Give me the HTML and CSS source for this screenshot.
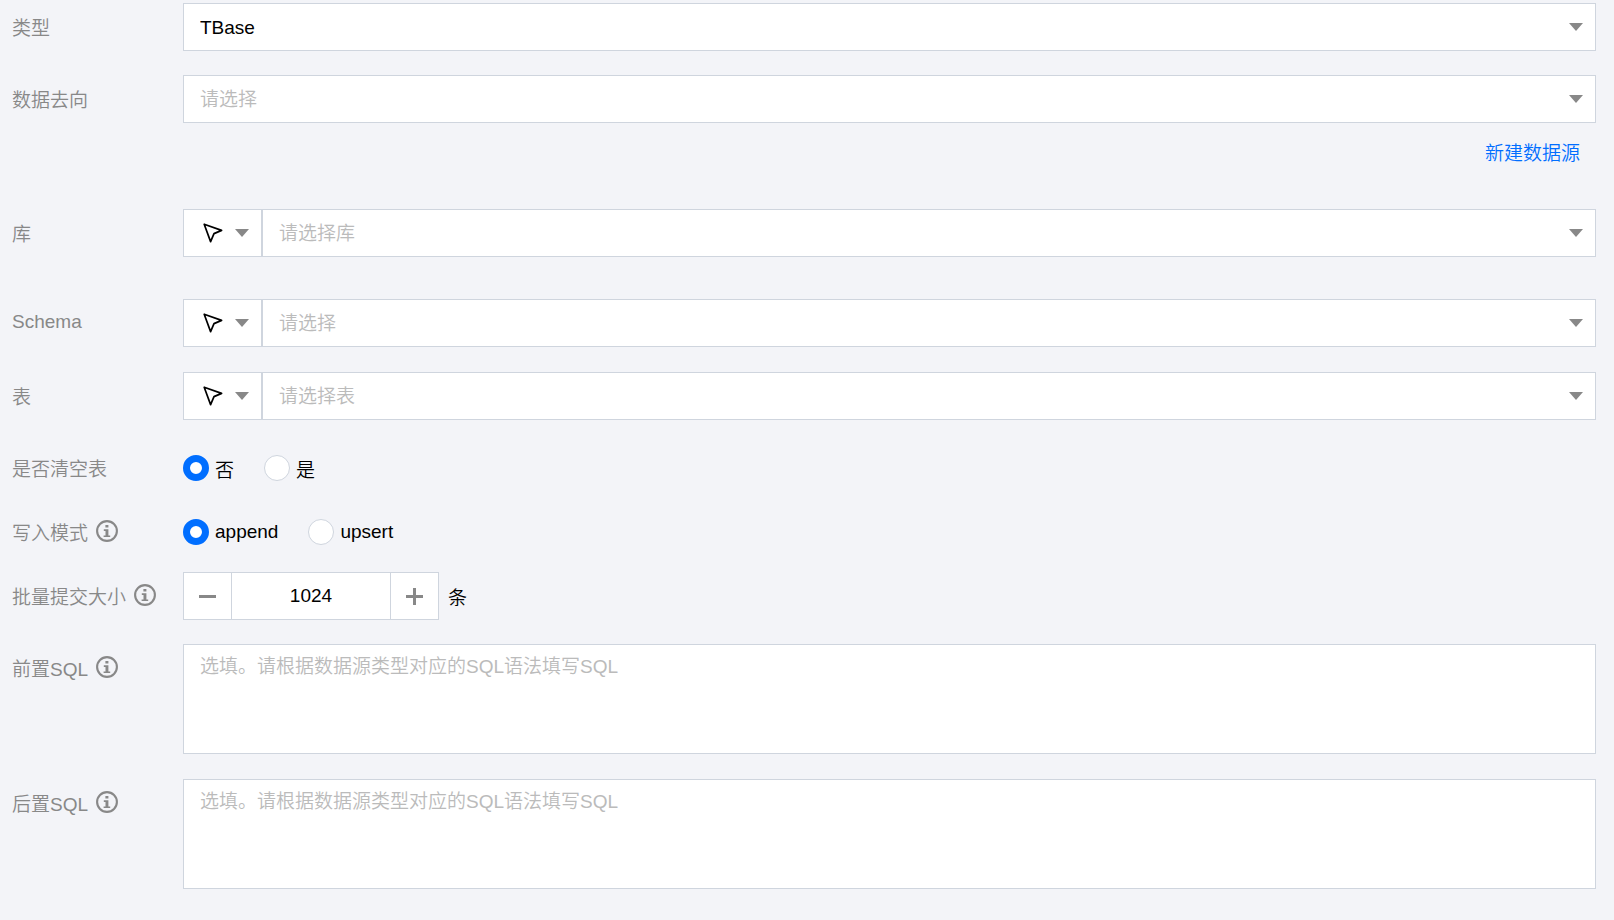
FILE: index.html
```html
<!DOCTYPE html>
<html lang="zh-CN">
<head>
    <meta charset="UTF-8">
    <meta name="viewport" content="width=device-width, initial-scale=1.0">
    <title>数据去向</title>
    <link rel="stylesheet" href="styles.css">
</head>
<body>

    <!-- shared icons -->
    <svg class="sprite" aria-hidden="true">
        <symbol id="icon-cursor" viewBox="0 0 20 20">
            <path d="M1.2 1.2 L18.6 7.4 L11 10.6 L7.6 18.6 Z" fill="none" stroke="#000" stroke-width="1.7" stroke-linejoin="round"/>
        </symbol>
        <symbol id="icon-info" viewBox="0 0 22 22">
            <circle cx="11" cy="11" r="9.9" fill="none" stroke="#888" stroke-width="2.1"/>
            <path d="M9.4 5h3v2.6h-3z M7.8 9.3h4.6v6.1h1.8v1.7H7.6v-1.7h1.9V11H7.8z" fill="#888"/>
        </symbol>
    </svg>

    <form class="form">
        <div class="row">
            <label class="label" for="type">类型</label>
            <div class="select">
                <select id="type">
                    <option>TBase</option>
                </select>
            </div>
        </div>

        <div class="row row-wide">
            <label class="label" for="source">数据去向</label>
            <div>
                <div class="select">
                    <select id="source" required>
                        <option value="">请选择</option>
                    </select>
                </div>
                <div class="extra"><a href="#">新建数据源</a></div>
            </div>
        </div>

        <div class="row row-wide">
            <label class="label" for="db">库</label>
            <div class="group">
                <button type="button" class="mode" aria-label="选择方式"><svg class="cursor"><use href="#icon-cursor"/></svg></button>
                <div class="select">
                    <select id="db" required>
                        <option value="">请选择库</option>
                    </select>
                </div>
            </div>
        </div>

        <div class="row row-loose">
            <label class="label" for="schema">Schema</label>
            <div class="group">
                <button type="button" class="mode" aria-label="选择方式"><svg class="cursor"><use href="#icon-cursor"/></svg></button>
                <div class="select">
                    <select id="schema" required>
                        <option value="">请选择</option>
                    </select>
                </div>
            </div>
        </div>

        <div class="row">
            <label class="label" for="table">表</label>
            <div class="group">
                <button type="button" class="mode" aria-label="选择方式"><svg class="cursor"><use href="#icon-cursor"/></svg></button>
                <div class="select">
                    <select id="table" required>
                        <option value="">请选择表</option>
                    </select>
                </div>
            </div>
        </div>

        <div class="row row-tight" role="radiogroup" aria-labelledby="clear-label">
            <span class="label" id="clear-label">是否清空表</span>
            <div class="radios">
                <label class="radio"><input type="radio" name="clear" checked>否</label>
                <label class="radio"><input type="radio" name="clear">是</label>
            </div>
        </div>

        <div class="row row-tight" role="radiogroup" aria-labelledby="write-label">
            <span class="label" id="write-label">写入模式<svg class="info"><use href="#icon-info"/></svg></span>
            <div class="radios">
                <label class="radio"><input type="radio" name="write" checked>append</label>
                <label class="radio"><input type="radio" name="write">upsert</label>
            </div>
        </div>

        <div class="row">
            <label class="label" for="batch">批量提交大小<svg class="info"><use href="#icon-info"/></svg></label>
            <div class="batch">
                <div class="stepper">
                    <button type="button" class="step" id="minus" aria-label="减少"></button>
                    <input type="text" id="batch" value="1024">
                    <button type="button" class="step step-plus" id="plus" aria-label="增加"></button>
                </div>
                <span>条</span>
            </div>
        </div>

        <div class="row row-loose">
            <label class="label" for="pre-sql">前置SQL<svg class="info"><use href="#icon-info"/></svg></label>
            <textarea id="pre-sql" placeholder="选填。请根据数据源类型对应的SQL语法填写SQL"></textarea>
        </div>

        <div class="row">
            <label class="label" for="post-sql">后置SQL<svg class="info"><use href="#icon-info"/></svg></label>
            <textarea id="post-sql" placeholder="选填。请根据数据源类型对应的SQL语法填写SQL"></textarea>
        </div>
    </form>

    <script>
        const batch = document.getElementById("batch");

        function changeBatch(step) {
            batch.value = Math.max(1, (parseInt(batch.value, 10) || 0) + step);
        }

        document.getElementById("minus").addEventListener("click", () => changeBatch(-1));
        document.getElementById("plus").addEventListener("click", () => changeBatch(1));
    </script>

</body>
</html>
```
FILE: styles.css
```css
* {
    box-sizing: border-box;
}
body {
    margin: 0;
    background-color: #f3f4f8;
    color: #000;
}
body, select, input, textarea, button {
    font-family: "Liberation Sans", "Noto Sans CJK SC", sans-serif;
    font-size: 19px;
    font-weight: 350;
}
.sprite {
    display: none;
}
.form {
    padding: 3px 18px 0 12px;
}
.row {
    display: grid;
    grid-template-columns: 171px 1fr;
    align-items: start;
    margin-bottom: 24px;
}
.row-wide {
    margin-bottom: 42px;
}
.row-loose {
    margin-bottom: 25px;
}
.row-tight {
    margin-bottom: 16px;
}
.label {
    display: flex;
    align-items: center;
    height: 46px;
    color: #888;
    white-space: nowrap;
}
.info {
    width: 22px;
    height: 22px;
    margin-left: 8px;
}

/* selects */
.select {
    position: relative;
    flex: 1;
}
.select select {
    display: block;
    width: 100%;
    height: 48px;
    padding: 0 40px 0 16px;
    border: 1px solid #cfd5de;
    border-radius: 0;
    background-color: #fff;
    color: #000;
    appearance: none;
}
.select select:invalid {
    color: #bbb;
}
.select::after {
    content: "";
    position: absolute;
    top: 20px;
    right: 13px;
    border: solid transparent;
    border-width: 8px 7px 0;
    border-top-color: #888;
    pointer-events: none;
}
.extra {
    height: 44px;
    padding: 18px 16px 0;
    line-height: 26px;
    text-align: right;
}
.extra a {
    color: #006eff;
    text-decoration: none;
}
.group {
    display: flex;
}
.mode {
    display: flex;
    align-items: center;
    justify-content: space-between;
    width: 79px;
    height: 48px;
    padding: 0 12px 0 19px;
    border: 1px solid #cfd5de;
    background-color: #fff;
    cursor: pointer;
}
.mode::after {
    content: "";
    border: solid transparent;
    border-width: 8px 7px 0;
    border-top-color: #888;
}
.cursor {
    width: 20px;
    height: 20px;
}

/* radios */
.radios {
    display: flex;
    gap: 30px;
    height: 48px;
}
.radio {
    display: flex;
    align-items: center;
    gap: 6px;
}
.radio input {
    width: 26px;
    height: 26px;
    margin: 0;
    border: 1px solid #cfd5de;
    border-radius: 50%;
    background-color: #fff;
    appearance: none;
}
.radio input:checked {
    border: 7px solid #006eff;
}

/* batch size */
.batch {
    display: flex;
    align-items: center;
    gap: 9px;
}
.stepper {
    display: flex;
    width: 256px;
    height: 48px;
    border: 1px solid #cfd5de;
    background-color: #fff;
}
.stepper input {
    flex: 1;
    min-width: 0;
    padding: 0;
    border: solid #cfd5de;
    border-width: 0 1px;
    background-color: transparent;
    color: #000;
    text-align: center;
}
.step {
    display: grid;
    place-items: center;
    width: 47px;
    padding: 0;
    border: none;
    background-color: transparent;
    cursor: pointer;
}
.step::before,
.step-plus::after {
    content: "";
    grid-area: 1 / 1;
    width: 17px;
    height: 3px;
    background-color: #888;
}
.step-plus::after {
    width: 3px;
    height: 17px;
}

textarea {
    display: block;
    width: 100%;
    height: 110px;
    padding: 8px 16px;
    border: 1px solid #cfd5de;
    border-radius: 0;
    background-color: #fff;
    color: #000;
    line-height: 28px;
    resize: none;
}
textarea::placeholder {
    color: #bbb;
}
```
